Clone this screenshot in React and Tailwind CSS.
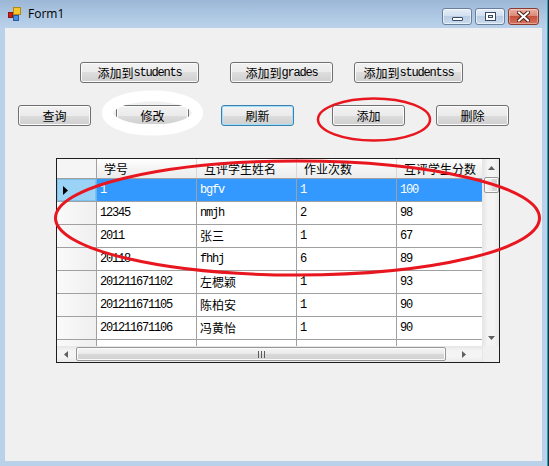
import React from 'react';

const cjk = "[font-family:'Noto_Sans_CJK_SC',sans-serif] text-[12px]";
const mono = "[font-family:'Liberation_Mono',monospace] text-[12px] tracking-[-1.2px]";

const rows = [
  ['1', 'bgfv', '1', '100'],
  ['12345', 'nmjh', '2', '98'],
  ['2011', '张三', '1', '67'],
  ['20118', 'fhhj', '6', '89'],
  ['201211671102', '左楒颖', '1', '93'],
  ['201211671105', '陈柏安', '1', '90'],
  ['201211671106', '冯黄怡', '1', '90'],
];

const isCjk = (s) => /[\u4e00-\u9fff]/.test(s);

const btnBase =
  'h-[21px] flex items-center justify-center rounded-[3px] border text-black leading-none bg-[linear-gradient(#f2f2f2,#ebebeb_50%,#dddddd_50%,#cfcfcf)]';

const Button = ({ className, focused, children }) => (
  <div
    className={
      btnBase +
      ' ' +
      className +
      (focused
        ? ' border-[#3c7fb1] shadow-[inset_0_0_0_1px_#9fe2fa]'
        : ' border-[#707070] shadow-[inset_0_0_0_1px_#fbfbfb]')
    }
  >
    {children}
  </div>
);

const Label = ({ zh, en }) => (
  <span className="flex items-center">
    <span className={cjk}>{zh}</span>
    {en && <span className={mono}>{en}</span>}
  </span>
);

const Tri = ({ dir, className }) => {
  const pts = {
    up: '0,4 3.5,0 7,4',
    down: '0,0 3.5,4 7,0',
    left: '4,0 0,3.5 4,7',
    right: '0,0 4,3.5 0,7',
  }[dir];
  const vert = dir === 'up' || dir === 'down';
  return (
    <svg width={vert ? 7 : 4} height={vert ? 4 : 7} className={className}>
      <polygon points={pts} fill="#606060" />
    </svg>
  );
};

const Cell = ({ text, sel, last }) => (
  <div
    className={
      'h-full flex items-center pl-[3px] overflow-hidden whitespace-nowrap border-r border-[#a0a0a0] ' +
      (last ? 'w-[85px] border-r-0 ' : 'w-[100px] ') +
      (sel ? 'bg-[#3399ff] text-white' : 'bg-white text-black')
    }
  >
    <span className={isCjk(text) ? cjk : mono}>{text}</span>
  </div>
);

const DataGrid = () => (
  <div className="ml-[51px] mt-[32px] w-[444px] h-[205px] border border-[#1e1e1e] flex bg-white">
    <div className="w-[425px] flex flex-col">
      {/* header */}
      <div className="h-[20px] flex border-b border-[#a0a0a0] bg-[linear-gradient(#ffffff,#f4f4f4_50%,#ececec)]">
        <div className="w-[40px] border-r border-[#a0a0a0] bg-[#f5f5f5]" />
        {['学号', '互评学生姓名', '作业次数', '互评学生分数'].map((h, i) => (
          <div
            key={h}
            className={
              'h-full flex items-center pl-[7px] whitespace-nowrap overflow-hidden ' +
              (i === 3 ? 'w-[85px]' : 'w-[100px] border-r border-[#d8d8d8]')
            }
          >
            <span className={cjk + ' text-black'}>{h}</span>
          </div>
        ))}
      </div>
      {/* rows */}
      {rows.map((r, ri) => {
        const sel = ri === 0;
        return (
          <div key={ri} className="h-[23px] flex border-b border-[#a0a0a0]">
            <div
              className={
                'w-[40px] h-full flex items-center pl-[6px] border-r ' +
                (sel
                  ? 'bg-[#9bd3f7] border-[#6cb4e2] shadow-[inset_0_0_0_1px_#7cc2ec]'
                  : 'bg-[linear-gradient(90deg,#fafafa,#efefef)] border-[#a0a0a0]')
              }
            >
              {sel && (
                <svg width="5" height="9">
                  <polygon points="0,0 5,4.5 0,9" fill="#000" />
                </svg>
              )}
            </div>
            {r.map((c, ci) => (
              <Cell key={ci} text={c} sel={sel} last={ci === 3} />
            ))}
          </div>
        );
      })}
      {/* partial row */}
      <div className="h-[6px] flex">
        <div className="w-[40px] h-full border-r border-[#a0a0a0] bg-[linear-gradient(90deg,#fafafa,#efefef)]" />
        <div className="w-[100px] h-full border-r border-[#a0a0a0]" />
        <div className="w-[100px] h-full border-r border-[#a0a0a0]" />
        <div className="w-[100px] h-full border-r border-[#a0a0a0]" />
        <div className="w-[85px] h-full" />
      </div>
      {/* horizontal scrollbar */}
      <div className="h-[16px] flex items-center bg-[linear-gradient(#e6e6e6,#f4f4f4_30%,#f4f4f4_70%,#e9e9e9)]">
        <div className="w-[17px] h-full flex items-center justify-center">
          <Tri dir="left" />
        </div>
        <div className="ml-[2px] w-[370px] h-[14px] rounded-[2px] border border-[#979797] bg-[linear-gradient(#f5f5f5,#e9e9e9_50%,#d9d9d9_50%,#d2d2d2)] shadow-[inset_0_0_0_1px_#fafafa] flex items-center justify-center">
          <div className="flex gap-[2px]">
            <div className="w-[1px] h-[7px] bg-[#5a5a5a]" />
            <div className="w-[1px] h-[7px] bg-[#5a5a5a]" />
            <div className="w-[1px] h-[7px] bg-[#5a5a5a]" />
          </div>
        </div>
        <div className="flex-1 h-full flex items-center justify-center">
          <Tri dir="right" />
        </div>
      </div>
    </div>
    {/* vertical scrollbar + corner */}
    <div className="w-[17px] flex flex-col border-l border-[#e6e6e6]">
      <div className="h-[187px] flex flex-col items-center bg-[linear-gradient(90deg,#e6e6e6,#f4f4f4_30%,#f4f4f4_70%,#e9e9e9)]">
        <div className="h-[17px] flex items-center justify-center">
          <Tri dir="up" />
        </div>
        <div className="mt-[1px] w-[15px] h-[16px] rounded-[2px] border border-[#979797] bg-[linear-gradient(90deg,#f5f5f5,#e9e9e9_50%,#d9d9d9_50%,#d2d2d2)] shadow-[inset_0_0_0_1px_#fafafa]" />
        <div className="flex-1" />
        <div className="h-[17px] flex items-center justify-center">
          <Tri dir="down" />
        </div>
      </div>
      <div className="flex-1 bg-[#f0f0f0]" />
    </div>
  </div>
);

const TitleBar = () => (
  <div className="h-[28px] flex bg-[linear-gradient(#9cb7d6,#afc9e4_60%,#bad1ea)]">
    <div className="flex items-center h-full ml-[8px] gap-[6px]">
      <svg width="14" height="14" viewBox="0 0 14 14">
        <rect x="0.5" y="5.5" width="4" height="5" fill="#d21b14" stroke="#8a1a10" />
        <rect x="5.5" y="0.5" width="7" height="7" fill="#f6c62a" stroke="#b08a10" />
        <rect x="5.5" y="8.5" width="5" height="5" fill="#4a8ee0" stroke="#2a5aa0" />
      </svg>
      <span className="[font-family:'Open_Sans',sans-serif] text-[12px] text-black">Form1</span>
    </div>
    <div className="ml-auto mr-[8px] mt-[8px] flex gap-[3px] self-start">
      <div className="w-[30px] h-[17px] rounded-[3px] border border-[#6a7f9c] bg-[linear-gradient(#e6eef8,#d2e0f0_45%,#b9cde4_50%,#cadcef)] shadow-[inset_0_0_0_1px_rgba(255,255,255,0.55)] flex justify-center items-end pb-[3px]">
        <div className="w-[11px] h-[4px] bg-white border border-[#3b4a63] rounded-[1px]" />
      </div>
      <div className="w-[30px] h-[17px] rounded-[3px] border border-[#6a7f9c] bg-[linear-gradient(#e6eef8,#d2e0f0_45%,#b9cde4_50%,#cadcef)] shadow-[inset_0_0_0_1px_rgba(255,255,255,0.55)] flex justify-center items-center">
        <div className="w-[11px] h-[9px] bg-white border border-[#3b4a63] flex items-center justify-center">
          <div className="w-[5px] h-[3px] border border-[#3b4a63] bg-[#dde6f0]" />
        </div>
      </div>
      <div className="w-[31px] h-[17px] rounded-[3px] border border-[#8a3a30] bg-[linear-gradient(#eab0a2,#dc8a77_45%,#c7503d_50%,#d5735c)] shadow-[inset_0_0_0_1px_rgba(255,255,255,0.35)] flex justify-center items-center">
        <svg width="13" height="11" viewBox="0 0 13 11">
          <path d="M2 1.5 L11 9.5 M11 1.5 L2 9.5" stroke="#4a2018" strokeWidth="4" strokeLinecap="square" />
          <path d="M2 1.5 L11 9.5 M11 1.5 L2 9.5" stroke="#ffffff" strokeWidth="2" strokeLinecap="square" />
        </svg>
      </div>
    </div>
  </div>
);

export default function App() {
  return (
    <div className="relative w-[549px] h-[466px] overflow-hidden bg-[#bad1ea]">
      <div className="flex h-[466px]">
        <div className="w-[547px] flex flex-col">
          <TitleBar />
          <div className="mx-[5px] h-[433px] bg-[#f0f0f0] flex flex-col">
            <div className="mt-[34px] pl-[75px] flex">
              <Button className="w-[119px]">
                <Label zh="添加到" en="students" />
              </Button>
              <Button className="w-[103px] ml-[31px]">
                <Label zh="添加到" en="grades" />
              </Button>
              <Button className="w-[109px] ml-[21px]">
                <Label zh="添加到" en="studentss" />
              </Button>
            </div>
            <div className="mt-[22px] pl-[13px] flex">
              <Button className="w-[73px]">
                <Label zh="查询" />
              </Button>
              <Button className="w-[73px] ml-[25px]">
                <Label zh="修改" />
              </Button>
              <Button className="w-[73px] ml-[32px]" focused>
                <Label zh="刷新" />
              </Button>
              <Button className="w-[73px] ml-[38px]">
                <Label zh="添加" />
              </Button>
              <Button className="w-[73px] ml-[31px]">
                <Label zh="删除" />
              </Button>
            </div>
            <DataGrid />
          </div>
        </div>
        <div className="w-[1px] bg-[#3a9ab4]" />
        <div className="w-[1px] bg-[#123442]" />
      </div>
      {/* hand-drawn annotations over the form */}
      <svg className="pointer-events-none absolute left-0 top-0" width="549" height="466">
        <ellipse cx="152.5" cy="113" rx="45" ry="17" fill="none" stroke="#ffffff" strokeWidth="11" />
        <ellipse cx="374" cy="119.5" rx="56" ry="21" fill="none" stroke="#e8161f" strokeWidth="2.5" />
        <ellipse cx="297.5" cy="218" rx="242" ry="57" fill="none" stroke="#e8161f" strokeWidth="3" />
      </svg>
    </div>
  );
}
